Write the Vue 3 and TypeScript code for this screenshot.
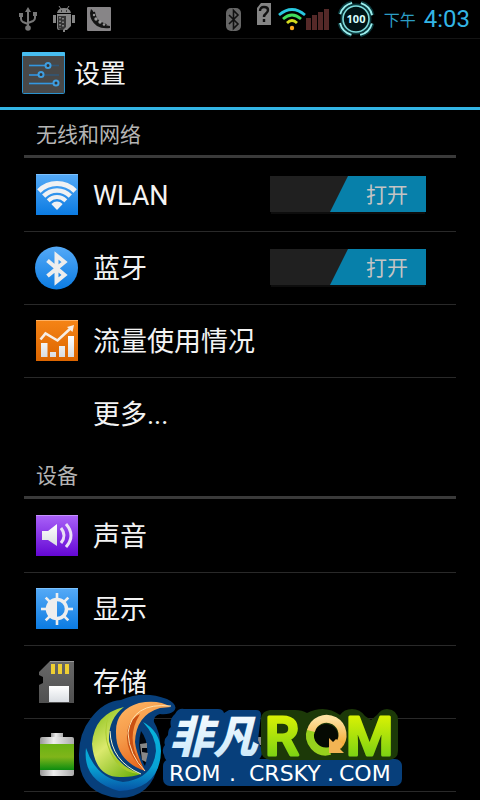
<script setup lang="ts">
import { reactive } from 'vue'

type IconName = 'wifi' | 'bluetooth' | 'data' | 'sound' | 'display' | 'storage' | 'battery'

interface Item {
  id: string
  label: string
  icon?: IconName
  on?: boolean
}

interface Section {
  title: string
  items: Item[]
}

const sections = reactive<Section[]>([
  {
    title: '无线和网络',
    items: [
      { id: 'wlan', label: 'WLAN', icon: 'wifi', on: true },
      { id: 'bluetooth', label: '蓝牙', icon: 'bluetooth', on: true },
      { id: 'data', label: '流量使用情况', icon: 'data' },
      { id: 'more', label: '更多...' },
    ],
  },
  {
    title: '设备',
    items: [
      { id: 'sound', label: '声音', icon: 'sound' },
      { id: 'display', label: '显示', icon: 'display' },
      { id: 'storage', label: '存储', icon: 'storage' },
      { id: 'battery', label: '电池', icon: 'battery' },
    ],
  },
])

const rays = [0, 45, 90, 135, 180, 225, 270, 315]
</script>

<template>
  <div class="screen">
    <svg class="defs" width="0" height="0" aria-hidden="true">
      <defs>
        <linearGradient id="blue" x2="0" y2="1"><stop stop-color="#55aaf7" /><stop offset="1" stop-color="#0b7be2" /></linearGradient>
        <linearGradient id="orange" x2="0" y2="1"><stop stop-color="#f58416" /><stop offset="1" stop-color="#dc6500" /></linearGradient>
        <linearGradient id="purple" x2="0" y2="1"><stop stop-color="#aa62f8" /><stop offset="1" stop-color="#6407d4" /></linearGradient>
        <linearGradient id="white" x2="0" y2="1"><stop stop-color="#fff" /><stop offset="1" stop-color="#d9dde2" /></linearGradient>
        <linearGradient id="grey" x2="0" y2="1"><stop stop-color="#686868" /><stop offset="1" stop-color="#505050" /></linearGradient>
        <linearGradient id="cell" x2="0" y2="1"><stop stop-color="#69b313" /><stop offset=".5" stop-color="#80b51a" /><stop offset="1" stop-color="#0b8c10" /></linearGradient>
        <linearGradient id="metal"><stop stop-color="#999" /><stop offset=".4" stop-color="#eee" /><stop offset="1" stop-color="#aaa" /></linearGradient>
        <clipPath id="fan"><path d="M22 37L0 14V0h44v14z" /></clipPath>
      </defs>
    </svg>

    <header class="status">
      <div class="status-group left">
        <svg width="18" height="26" viewBox="0 0 18 26" fill="none" stroke="#777" stroke-width="2">
          <path d="M9 5v15M2 9v4q0 2 2 3l5 2M16 8v4q0 2-2 3l-5 2" />
          <path d="M9 1l-3 5h6zM0 7h4v4H0zM14 6h4v4h-4z" fill="#777" stroke="none" />
          <circle cx="9" cy="22" r="2.8" fill="#777" stroke="none" />
        </svg>
        <svg width="24" height="26" viewBox="0 0 24 26">
          <path d="M5 7q1-5 7-5t7 5zM5 8h14v12l-4 4h-2v2h-2v-2H7q-2 0-2-2zM1 9h3v8H1zM20 9h3v8h-3z" fill="#858585" />
          <path d="M7 0l2 3M17 0l-2 3" stroke="#858585" />
          <path d="M6 10h8v11l-3 3H8q-2-1-2-3z" fill="#333" />
          <path d="M8 11v11M11 12v10" stroke="#999" stroke-width="1.500" stroke-dasharray="1.500 2" />
          <path d="M9 5h1M14 5h1" stroke="#222" stroke-width="1.500" />
        </svg>
        <svg width="24" height="24" viewBox="0 0 24 24">
          <rect width="24" height="24" rx="1" fill="#878587" />
          <path d="M4 2l2 2q0 5 4 8t7 6l6 1v2q-8 1-13-2Q3 14 3 6z" fill="#151515" />
          <path d="M6 5q1 7 6 11l7 3" fill="none" stroke="#151515" stroke-width="4" />
          <g fill="#999"><circle cx="7" cy="8" r="1.200" /><circle cx="9" cy="12" r="1.700" /><circle cx="13" cy="15" r="1.700" /><circle cx="17" cy="17.500" r="1.300" /></g>
        </svg>
      </div>
      <div class="status-group right">
        <svg width="132" height="38" viewBox="226 0 132 38" class="signals">
          <rect x="226" y="8" width="15" height="23" rx="5" fill="#666" />
          <path d="M229 15l9 9-4.500 4.500v-18l4.500 4.500-9 9" fill="none" stroke="#111" stroke-width="1.600" />
          <path d="M261 3h10v22h-14V8z" fill="#858585" />
          <path d="M260 11q0-4 4-4t4 3q0 2-2 3.500t-2 3.500M264 19v3" fill="none" stroke="#111" stroke-width="2.400" />
          <g fill="none" stroke-width="2.800">
            <path d="M279 15q13-11 26 0" stroke="#28c8df" />
            <path d="M283 19q9-8 18 0" stroke="#42de5c" />
            <path d="M287 23q5-5 10 0" stroke="#d5dc20" />
          </g>
          <circle cx="292" cy="28" r="2.200" fill="#ffa91f" />
          <path d="M306 18h5v12h-5zM312 15h5v15h-5zM318 12h5v18h-5zM324 9h5v21h-5z" fill="#552928" />
        </svg>
        <svg width="38" height="38" viewBox="0 0 38 38" class="ring">
          <g fill="none" stroke="#167d85" stroke-width="5" opacity=".45">
            <circle cx="19" cy="19" r="13" />
            <circle cx="19" cy="19" r="16.500" stroke-dasharray="17 8.900" stroke-dashoffset="-4.500" />
          </g>
          <circle cx="19" cy="19" r="13" fill="#001315" stroke="#7edbdc" stroke-width="1.600" />
          <circle cx="19" cy="19" r="16.500" fill="none" stroke="#9beeed" stroke-width="1.800" stroke-dasharray="17 8.900" stroke-dashoffset="-4.500" />
          <text x="19" y="23" text-anchor="middle" class="level">100</text>
        </svg>
        <span class="ampm">下午</span>
        <time class="clock">4:03</time>
      </div>
    </header>

    <div class="title-bar">
      <svg width="43" height="42" viewBox="0 0 43 42">
        <rect x=".5" y=".5" width="42" height="41" rx="1" fill="#484848" stroke="#2b91cc" />
        <path d="M0 1q0-1 1-1h41q1 0 1 1v3H0z" fill="#48bdf0" />
        <path d="M7 13.500h30M7 23h30M7 31.500h30" stroke="#315778" stroke-width="1.400" />
        <path d="M7 13.500h17M7 23h9M7 31.500h24" stroke="#3497df" stroke-width="1.600" />
        <g fill="#333" stroke="#3f9ee0" stroke-width="2"><circle cx="26" cy="13.500" r="2.500" /><circle cx="19" cy="22.500" r="2.500" /><circle cx="34" cy="31" r="2.500" /></g>
      </svg>
      <h1>设置</h1>
    </div>

    <main>
      <section v-for="section in sections" :key="section.title">
        <h2>{{ section.title }}</h2>
        <ul>
          <li v-for="item in section.items" :key="item.id">
            <span class="icon">
              <svg v-if="item.icon" width="44" height="44" viewBox="0 0 44 44" aria-hidden="true">
                <template v-if="item.icon === 'wifi'">
                  <rect x="1" y="1" width="42" height="41" fill="url(#blue)" />
                  <path d="M1 1.500h42" stroke="#7cc2ff" />
                  <g clip-path="url(#fan)" fill="none" stroke="#f0f1f3">
                    <circle cx="22" cy="36" r="25.500" stroke-width="5" />
                    <circle cx="22" cy="36" r="18.500" stroke-width="4.500" />
                    <circle cx="22" cy="36" r="12" stroke-width="4" />
                    <circle cx="22" cy="36" r="7.500" fill="#f0f1f3" stroke="none" />
                  </g>
                </template>
                <template v-else-if="item.icon === 'bluetooth'">
                  <circle cx="21.500" cy="22" r="21.500" fill="url(#blue)" />
                  <path d="M12.500 14.500l17 14.500-8 6.500V9.500l8 6.500-17 14" fill="none" stroke="#ededed" stroke-width="4" />
                </template>
                <template v-else-if="item.icon === 'data'">
                  <rect x="1" y="1" width="42" height="41" fill="url(#orange)" />
                  <path d="M1 1.500h42" stroke="#ffb163" />
                  <path d="M6 24h6.500v14H6zM15 33h6v5h-6zM24 27h6v11h-6zM33 17h6v21h-6z" fill="url(#white)" />
                  <path d="M5.500 20.500l5-6 12 7L36 9" fill="none" stroke="#f7eee5" stroke-width="2.600" />
                  <path d="M32 8l7-2-1.500 7z" fill="#f7eee5" />
                </template>
                <template v-else-if="item.icon === 'sound'">
                  <rect x="1" y="1" width="42" height="41" fill="url(#purple)" />
                  <path d="M1 1.500h42" stroke="#c691ff" />
                  <path d="M7 17h6l9-7v22l-9-6H7z" fill="url(#white)" />
                  <path d="M26 14q6 7.500 0 15M31 10q10 11.500 0 23" fill="none" stroke="#eae0f6" stroke-width="3" />
                </template>
                <template v-else-if="item.icon === 'display'">
                  <rect x="1" y="1" width="42" height="41" fill="url(#blue)" />
                  <path d="M1 1.500h42" stroke="#7cc2ff" />
                  <path v-for="ray in rays" :key="ray" d="M22 12V6" :transform="`rotate(${ray} 22 22)`" stroke="#eee" stroke-width="2.600" />
                  <circle cx="22" cy="22" r="9.500" fill="none" stroke="#eee" stroke-width="3.500" />
                  <path d="M22 12a10 10 0 0 0 0 20z" fill="#eee" />
                </template>
                <template v-else-if="item.icon === 'storage'">
                  <path d="M15 1h24v42H4V25l4-2v-6l-4-2v-3z" fill="url(#grey)" />
                  <path d="M15 1.500h24" stroke="#999" />
                  <path d="M16 4h4v10h-4zM23 4h4v10h-4zM30 4h4v10h-4z" fill="#efcf32" />
                  <path d="M14 26h20v16H14z" fill="url(#white)" />
                </template>
                <template v-else>
                  <path d="M16 0h12v5H16z" fill="url(#metal)" />
                  <rect x="5" y="4" width="34" height="39" rx="2" fill="url(#metal)" />
                  <path d="M5 11h34v26H5z" fill="url(#cell)" />
                </template>
              </svg>
            </span>
            <a class="label" :href="`#${item.id}`">{{ item.label }}</a>
            <button
              v-if="item.on !== undefined"
              type="button"
              role="switch"
              class="switch"
              :class="{ off: !item.on }"
              :aria-checked="item.on"
              :aria-label="item.label"
              @click="item.on = !item.on"
            >
              <span class="thumb">{{ item.on ? '打开' : '关闭' }}</span>
            </button>
          </li>
        </ul>
      </section>
    </main>

    <svg class="brand" width="326" height="108" viewBox="78 692 326 108" role="img" aria-label="非凡ROM">
      <defs>
        <linearGradient id="lime" x2="0" y2="1"><stop stop-color="#f1fa00" /><stop offset="1" stop-color="#62c817" /></linearGradient>
        <linearGradient id="leaf" x1=".2" x2=".8" y2="1"><stop stop-color="#8fc31f" /><stop offset=".45" stop-color="#dbe96d" /><stop offset="1" stop-color="#74b411" /></linearGradient>
        <linearGradient id="flame" x2=".4" y2="1"><stop stop-color="#ffb765" /><stop offset=".5" stop-color="#f59a49" /><stop offset="1" stop-color="#e7641a" /></linearGradient>
        <linearGradient id="water" x2="0" y2="1"><stop stop-color="#06b5dc" /><stop offset=".65" stop-color="#08a3d4" /><stop offset="1" stop-color="#0753a5" /></linearGradient>
        <linearGradient id="ice" x2="0" y2="1"><stop stop-color="#fff" /><stop offset="1" stop-color="#c5e6fa" /></linearGradient>
        <linearGradient id="gold" x2="0" y2="1"><stop stop-color="#fde1a0" /><stop offset="1" stop-color="#f3aa32" /></linearGradient>
      </defs>
      <path d="M257 737h5l-1 8h-5zM285 746h5l2 15h-8zM229 757h4l2 5h-6z" fill="#888" />
      <!-- backing plates -->
      <path d="M91 718q13-17 30-18q22-10 46-1q12 6 7 12q-5 4-14 3q-7 2-6 8q8 13 6 33q-5 43-41 43q-41-4-40-44q0-21 12-36z" fill="#073f7b" />
      <path d="M141 731q10 13 4 35q-9-16-4-35z" fill="#02060c" />
      <path d="M140 744l7-1v5h-5v4l6 1-2 9-4-2z" fill="#888" />
      <path d="M175 714q3-6 9-5h34q5 0 6 4l5-3h27q5 0 5 5l-3 25 4 10q1 8-7 12h-84q-6 0-7-7-3-6 1-10-2-5 3-10 0-6 3-8-2-8 4-13z" fill="#073f7b" />
      <rect x="163" y="759" width="239" height="27" rx="7" fill="#073f7b" />
      <path d="M261 718q1-7 9-8h25q7 0 12 3q18-9 33 2q4-6 12-6q8 0 13 7l6 4 6-5q4-6 10-6q11 1 11 11v31q0 8-9 9H271q-10-1-10-10z" fill="#1c3908" />
      <circle cx="326" cy="736" r="12" fill="#050a03" />
      <!-- crescents -->
      <path d="M86 748q-4 33 33 43q41-2 42-40q-1-20-18-29q13 14 13 29q-3 28-33 31q-27-4-37-34z" fill="url(#water)" />
      <path d="M124 707q-30 7-32 37q3 35 31 33q10 0 18-3q-27-9-32-33q-1-22 15-34z" fill="url(#leaf)" />
      <path d="M108 717q-9 42 32 57q-18-1-27-16q-12-20-5-41z" fill="#a8cb2c" />
      <path d="M110 731q1 30 31 43" fill="none" stroke="#f7f7ca" />
      <path d="M171 707q-13-8-32-4q-24 7-23 30q0 28 29 38q-9-18-10-29q1-27 25-34z" fill="url(#flame)" />
      <path d="M145 771q-22-30-5-57q-14 7-13 25q1 17 18 32z" fill="#c95012" />
      <path d="M171 706q-39-4-43 27q1 22 17 38" fill="none" stroke="#ffe2ad" />
      <!-- wordmark -->
      <text x="169" y="753" class="cn" fill="url(#ice)">非凡</text>
      <g fill="url(#lime)" stroke="url(#lime)" stroke-width="3" stroke-linejoin="round">
        <text x="265" y="755" class="latin">R</text>
        <text x="346" y="755" class="latin">M</text>
      </g>
      <path d="M311 730a16 16 0 0 0 19 21" fill="none" stroke="#96d01d" stroke-width="8" />
      <path d="M311 731a16 16 0 1 1 27 15" fill="none" stroke="url(#gold)" stroke-width="8" />
      <path d="M329 738l0 15 15 0-4-4 3-5-7-5-3 3z" fill="#f2b453" />
      <text y="781" class="domain" fill="#fff"><tspan x="169">ROM</tspan><tspan x="229">.</tspan><tspan x="249">CRSKY</tspan><tspan x="327">.</tspan><tspan x="339">COM</tspan></text>
    </svg>
  </div>
</template>

<style>
body {
  background: #000;
}
</style>

<style scoped>
.screen {
  position: relative;
  min-height: 100vh;
  background: #000;
  color: #f3f3f3;
  font-family: Roboto, "Noto Sans CJK SC", sans-serif;
}
.defs {
  position: absolute;
}
svg {
  display: block;
}
.status {
  display: flex;
  justify-content: space-between;
  height: 38px;
  padding: 0 10px 0 19px;
  border-bottom: 1px solid #141414;
}
.status-group {
  display: flex;
  align-items: center;
}
.left {
  gap: 15px;
}
.left svg:nth-child(2) {
  margin-right: -4px;
}
.ring {
  margin-right: 9px;
}
.signals {
  margin-right: -21px;
}
.level {
  font: bold 11px "Open Sans", sans-serif;
  fill: #d8ffff;
}
.ampm {
  color: #2c9dc5;
  font-size: 16px;
  line-height: 20px;
  margin: 4px 8px 0 0;
}
.clock {
  color: #33b5e5;
  font-size: 24px;
  line-height: 28px;
}
.title-bar {
  display: flex;
  align-items: center;
  gap: 9px;
  height: 68px;
  padding-left: 22px;
  border-bottom: 3px solid #33b5e5;
}
h1 {
  margin: 0;
  padding-top: 2px;
  font-size: 26px;
  font-weight: 400;
  line-height: 36px;
}
main {
  padding: 0 24px;
}
h2 {
  height: 45px;
  margin: 0 0 1px;
  padding-left: 12px;
  border-bottom: 3px solid #3a3a3a;
  color: #b4b4b4;
  font-size: 21px;
  font-weight: 400;
  line-height: 50px;
}
ul {
  margin: 0;
  padding: 0;
  list-style: none;
}
li {
  display: flex;
  align-items: center;
  box-sizing: border-box;
  height: 73px;
  padding: 0 30px 0 11px;
  border-bottom: 1px solid #292929;
}
section:first-child li:last-child {
  border-color: transparent;
}
.icon {
  flex: 0 0 58px;
}
.label {
  flex: 1;
  padding-top: 2px;
  color: inherit;
  font-size: 27px;
  line-height: 40px;
  text-decoration: none;
}
.switch {
  display: flex;
  justify-content: flex-end;
  width: 156px;
  height: 36px;
  margin-bottom: 2px;
  padding: 0;
  border: 0;
  background: #202020;
  box-shadow: 0 3px 0 -1px #0d0d0d;
}
.switch.off {
  justify-content: flex-start;
}
.thumb {
  box-sizing: border-box;
  width: 96px;
  padding-left: 36px;
  background: #0780aa;
  clip-path: polygon(18px 0, 100% 0, 100% 100%, 0 100%);
  color: #c4c4c4;
  font-family: Roboto, "Noto Sans CJK SC", sans-serif;
  font-size: 21px;
  line-height: 38px;
  text-align: left;
}
.off .thumb {
  background: #444;
}
.brand {
  position: absolute;
  bottom: 0;
  left: 78px;
}
.cn {
  font: italic 900 44px "Noto Sans CJK SC", sans-serif;
}
.latin {
  font: 500 54px Roboto, sans-serif;
}
.domain {
  font: 22px "DejaVu Sans", sans-serif;
}
</style>
